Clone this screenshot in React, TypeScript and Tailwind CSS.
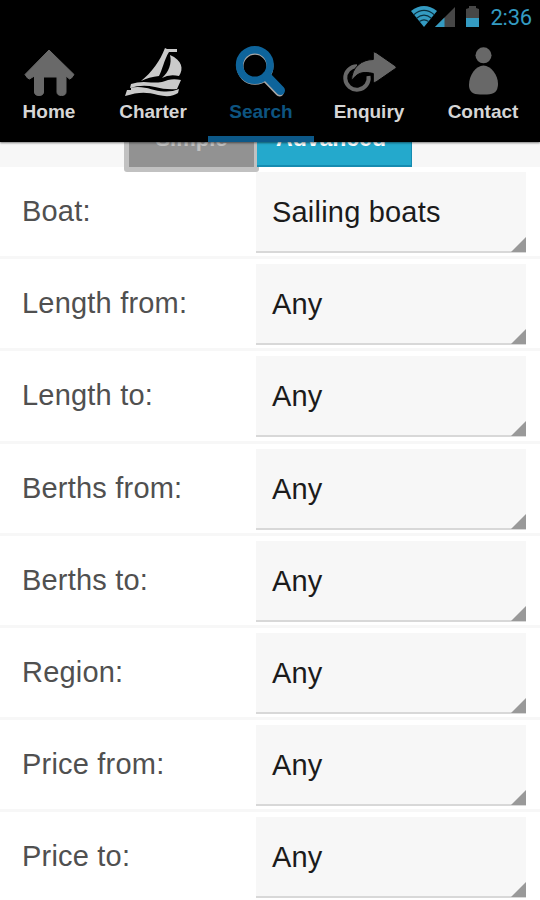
import type { ReactNode } from 'react';

const fields = [
  { label: 'Boat:', value: 'Sailing boats' },
  { label: 'Length from:', value: 'Any' },
  { label: 'Length to:', value: 'Any' },
  { label: 'Berths from:', value: 'Any' },
  { label: 'Berths to:', value: 'Any' },
  { label: 'Region:', value: 'Any' },
  { label: 'Price from:', value: 'Any' },
  { label: 'Price to:', value: 'Any' },
];

function Tab({ label, width, active = false, text = '', children }: { label: string; width: string; active?: boolean; text?: string; children: ReactNode }) {
  return (
    <div className={`flex h-full flex-col items-center ${width} ${active ? 'border-b-[6px] border-[#0c5888]' : ''}`}>
      <svg width="64" height="56" viewBox="0 0 64 56" className="mt-2 shrink-0">
        {children}
      </svg>
      <span className={`pt-px text-[19px] leading-[22px] font-bold ${active ? 'text-[#0d5480]' : 'text-[#d6d6d6]'} ${text}`}>{label}</span>
    </div>
  );
}

function StatusBar() {
  return (
    <div className="flex h-9 shrink-0 items-start justify-end pt-1.5 pr-2">
      <svg width="26" height="21" viewBox="0 0 28 21" preserveAspectRatio="none">
        <path d="M0 5Q14-5 28 5L14 21Z" fill="#349bc2" />
        <path d="M3 8.7Q14 0 25 8.7M6 12.2Q14 6 22 12.2M9 15.6Q14 12 19 15.6" fill="none" stroke="#092f3f" strokeWidth="1.2" />
      </svg>
      <svg width="20" height="21" viewBox="0 0 20 21" className="-ml-0.5">
        <path d="M0 21L20 1V21Z" fill="#474747" />
        <path d="M0 21L9.5 11.5V21Z" fill="#349bc2" />
      </svg>
      <svg width="15" height="21" viewBox="0 0 15 21" className="ml-2.5">
        <path d="M1 3L4 2V0H11V2L14 3V21H1Z" fill="#474747" />
        <path d="M1 12H14V21H1Z" fill="#349bc2" />
      </svg>
      <span className="ml-[10px] font-[Roboto,sans-serif] text-[22px] leading-6 tracking-[-0.2px] text-[#349bc2]">2:36</span>
    </div>
  );
}

export default function App() {
  return (
    <div className="flex h-[900px] w-[540px] flex-col overflow-hidden bg-white font-['Liberation_Sans',Arial,sans-serif]">
      <header className="z-10 flex h-[142px] shrink-0 flex-col bg-black shadow-[0_1px_2px_#00000080]">
        <StatusBar />
        <nav className="flex h-[106px]">
          <Tab label="Home" width="w-[98px]">
            <path d="M32 6L57 30.5L54.5 34L52.5 35L49 32V48Q49 51.5 44.5 51.5Q40 51.5 40 48V33H26.5V48Q26.5 51.5 22 51.5Q17.5 51.5 17.5 48V32L12.5 35L10.5 34L8 30.5Z" fill="#696969" stroke="#696969" strokeWidth="1" strokeLinejoin="round" />
          </Tab>
          <Tab label="Charter" width="w-[110px]">
            <path d="M44 4L46 5H56V8H48C43 16 41 27 38 32Q28 33 20 37C31 28 39 17 44 4Z" fill="#cacaca" />
            <path d="M49 11C61 16 63 25 58 32Q48 30 41 34C48 28 51 19 49 11Z" fill="#cacaca" />
            <path d="M10 40Q19 37 30 38.5Q41 39 47 36Q53 34.5 60 36L56 45Q45 46 34 43Q21 40 9 44Z" fill="#cacaca" />
            <path d="M10 43.5C24 41 32 47 43 47.5Q51 48 58 45L57 49Q50 54 37 51C25 47.5 17 48 4 52L6 46L10 46Z" fill="#cacaca" />
          </Tab>
          <Tab label="Search" width="w-[106px]" active>
            <circle cx="26" cy="22.3" r="15" fill="none" stroke="#a7a7a7" strokeWidth="7" />
            <path d="M37 34L50.5 48" stroke="#a7a7a7" strokeWidth="9" strokeLinecap="round" />
            <circle cx="25.8" cy="21" r="15.3" fill="none" stroke="#0e649b" strokeWidth="7.4" />
            <path d="M37.5 32L51.5 46.5" stroke="#0e649b" strokeWidth="9" strokeLinecap="round" />
          </Tab>
          <Tab label="Enquiry" width="w-[110px]">
            <path d="M20 22.3A11.7 11.7 0 1 0 31.5 32" fill="none" stroke="#686868" strokeWidth="4" />
            <path d="M14.5 37C14.5 23 25 15.5 36.3 15.5V9Q37 7.5 39 8.5L58.5 22Q60 23.3 58.5 24.5L39 38Q37 39 36.3 37.5V29.5C25 27 20 29 14.5 37Z" fill="#686868" stroke="#000" strokeWidth="1" />
          </Tab>
          <Tab label="Contact" width="w-[116px]" text="translate-x-[1px]">
            <circle cx="33.5" cy="11.3" r="8" fill="#686868" />
            <path d="M33.5 21.5C41 21.5 48 31 48 40Q48 50.5 37 50.5H30Q19 50.5 19 41C19 31 26 21.5 33.5 21.5Z" fill="#686868" />
          </Tab>
        </nav>
      </header>
      <div className="z-[1] flex h-[25px] shrink-0 items-end bg-[#f7f7f7] pl-[124px] text-center text-[23px] leading-[29px] font-bold">
        <div className="-mb-[5px] h-[50px] w-[135px] shrink-0 rounded-[3px] border-[5px] border-[#c1c1c1] bg-[#929292] text-[#c1c1c1]">
          <span className="block -translate-y-[3px] text-[22px]">Simple</span>
        </div>
        <div className="-ml-[2px] h-[44px] w-[155px] shrink-0 border-r border-b-2 border-[#168bb0] bg-[#24a9cc] text-white">
          <span className="block -translate-x-[3px] translate-y-px">Advanced</span>
        </div>
      </div>
      <main className="shrink-0">
        {fields.map((f) => (
          <div key={f.label} className="flex h-[92.2px] border-b-[3px] border-[#f7f7f7] pr-[14px] text-[29px] leading-[34px]">
            <div className="w-[256px] pt-[27px] pl-[22px] tracking-[0.2px] text-[#505050]">{f.label}</div>
            <div className="mt-[5px] flex h-[81px] flex-1 items-end justify-between border-b-2 border-[#d8d8d8] bg-[#f7f7f7] pl-4 text-[#1b1b1b]">
              <span className="self-start pt-[23px] tracking-[0.2px]">{f.value}</span>
              <svg width="15" height="15" viewBox="0 0 15 15" className="-mb-px">
                <path d="M15 0V15H0Z" fill="#999" />
              </svg>
            </div>
          </div>
        ))}
      </main>
    </div>
  );
}
